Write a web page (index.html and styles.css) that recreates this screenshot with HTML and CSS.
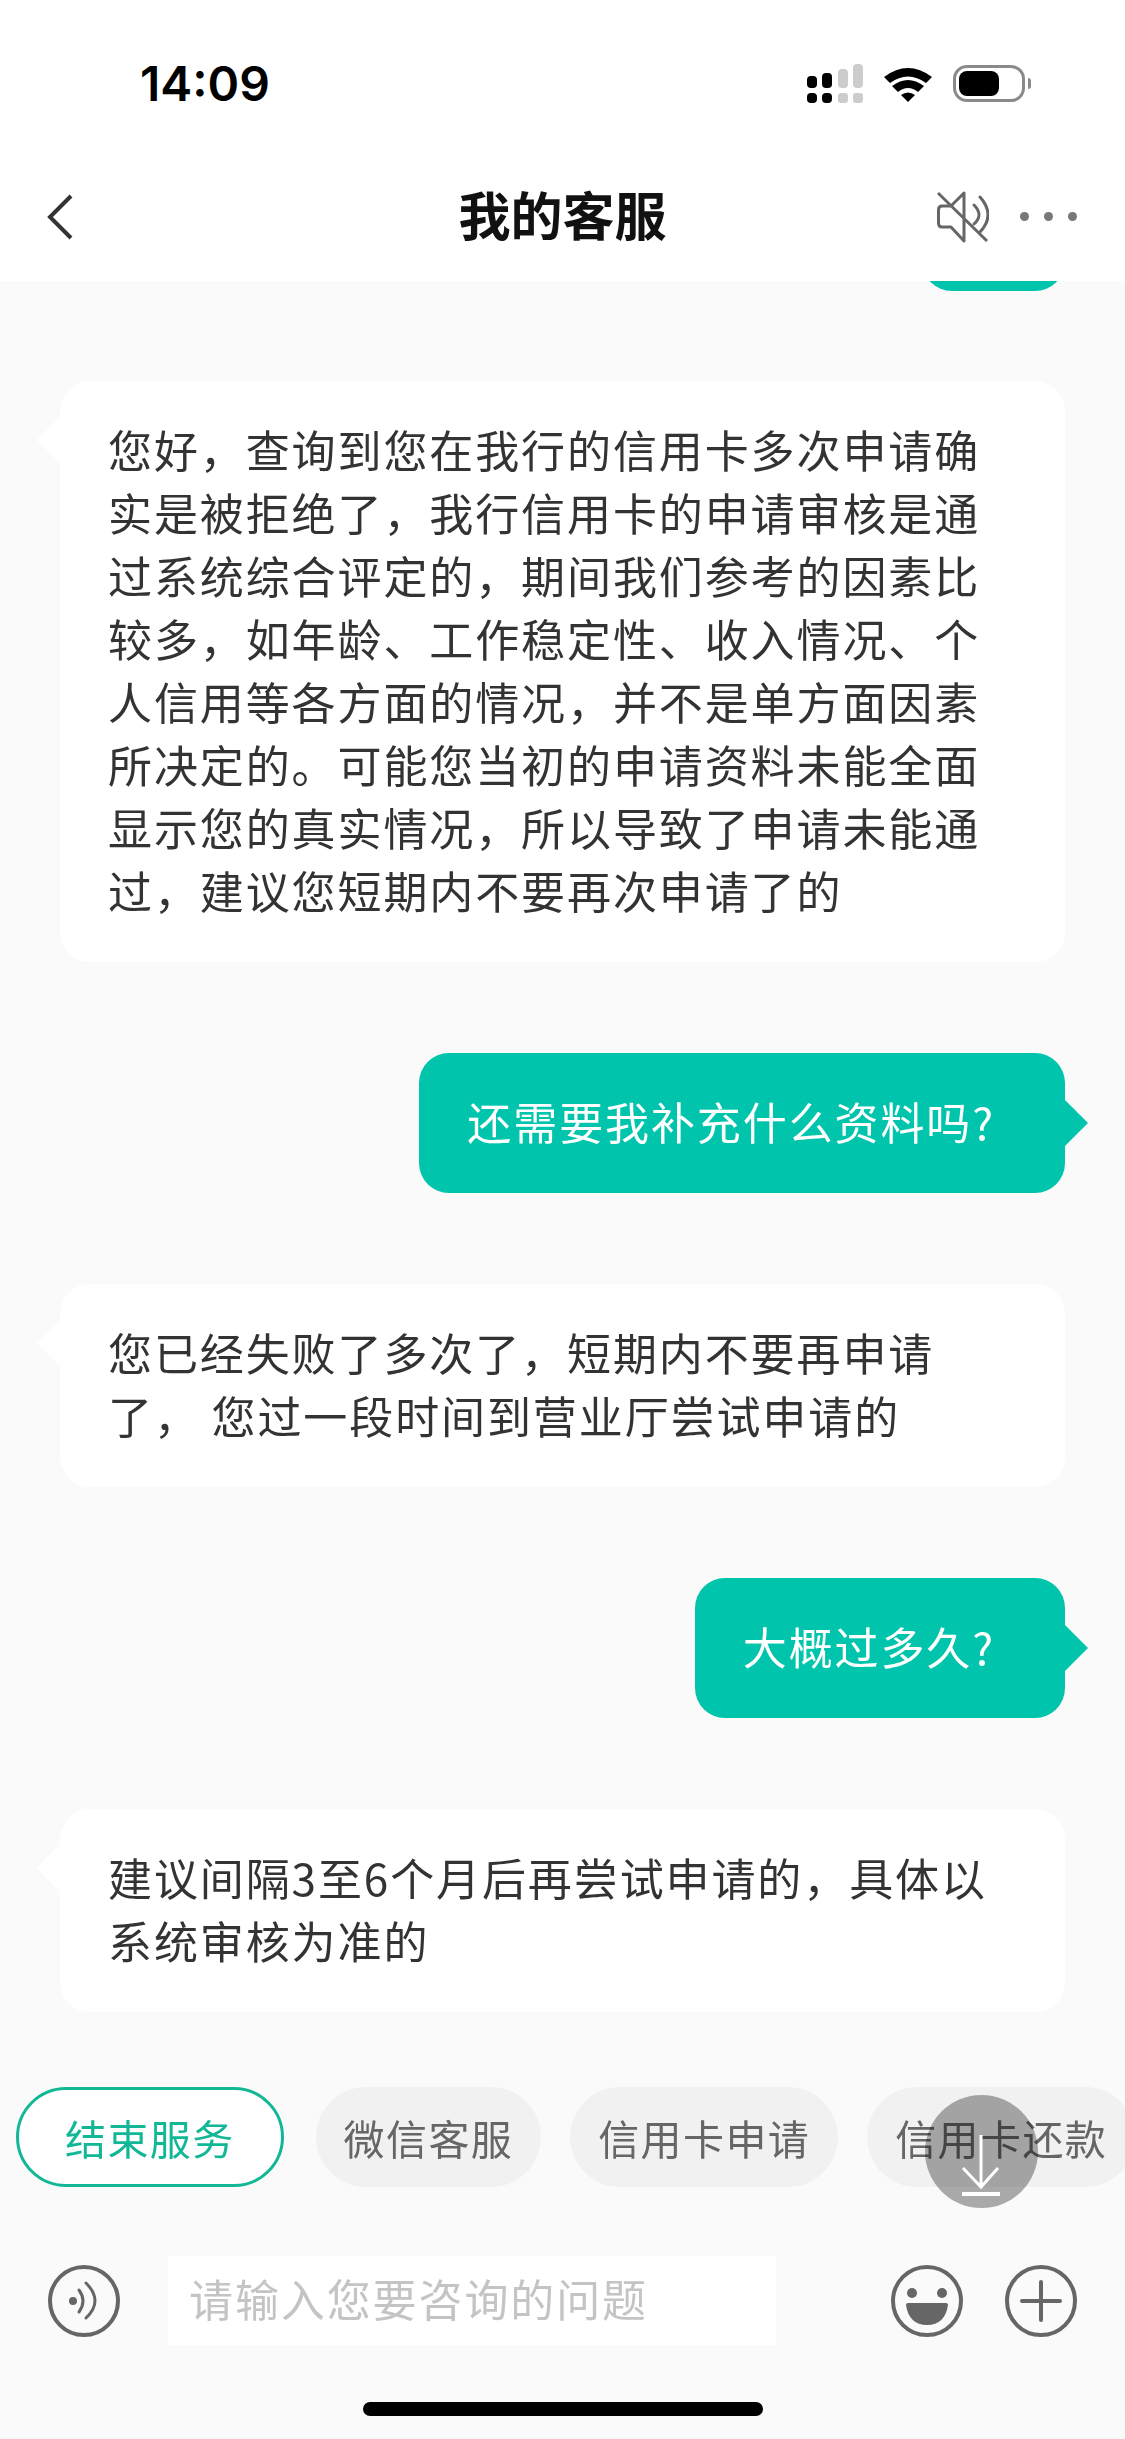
FILE: index.html
```html
<!DOCTYPE html>
<html lang="zh-CN">
<head>
  <meta charset="UTF-8">
  <title>我的客服</title>
  <link rel="stylesheet" href="styles.css">
</head>
<body>

  <div class="app">
    <header class="header">
      <div class="status-bar">
        <span class="time">14:09</span>
        <div class="status-icons">
          <svg class="signal" width="56" height="39" viewBox="0 0 56 39">
            <rect x="0" y="12" width="10" height="12" rx="4" fill="#000"/>
            <rect x="15" y="9" width="10" height="15" rx="4" fill="#000"/>
            <rect x="31" y="5" width="10" height="19" rx="4" fill="#ccc"/>
            <rect x="46" y="0" width="10" height="24" rx="4" fill="#ccc"/>
            <rect x="0" y="29" width="10" height="10" rx="4" fill="#000"/>
            <rect x="15" y="29" width="10" height="10" rx="4" fill="#000"/>
            <rect x="31" y="29" width="10" height="10" rx="3" fill="#ccc"/>
            <rect x="46" y="29" width="10" height="10" rx="3" fill="#ccc"/>
          </svg>
          <svg class="wifi" width="48" height="36" viewBox="0 0 48 36">
            <path d="M0 11 Q24 -7 48 11 L42 17 Q24 4 6 17 Z" fill="#000"/>
            <path d="M8 20 Q24 8 40 20 L34 26 Q24 18 14 26 Z" fill="#000"/>
            <path d="M17 29 Q24 24 31 29 L24 36 Z" fill="#000"/>
          </svg>
          <div class="battery">
            <div class="battery-fill"></div>
          </div>
          <div class="battery-nub"></div>
        </div>
      </div>
      <nav class="nav">
        <svg class="back" width="26" height="46" viewBox="0 0 26 46">
          <path d="M24 2 L3 23 L24 44" fill="none" stroke="#333" stroke-width="4"/>
        </svg>
        <h1 class="title">我的客服</h1>
        <svg class="mute" width="52" height="52" viewBox="0 0 52 52">
          <path d="M27 2 L14 15 H5 Q1.5 15 1.5 19 V32 Q1.5 36 5 36 H14 L27 50 Z" fill="none" stroke="#666" stroke-width="3" stroke-linejoin="round"/>
          <path d="M37 14 Q47 24 37 33" fill="none" stroke="#666" stroke-width="3" stroke-linecap="round"/>
          <path d="M43 6 Q59 24 43 41" fill="none" stroke="#666" stroke-width="3" stroke-linecap="round"/>
          <path d="M1 2 L50 50" fill="none" stroke="#666" stroke-width="3"/>
        </svg>
        <div class="more">
          <span class="more-dot"></span>
          <span class="more-dot"></span>
          <span class="more-dot"></span>
        </div>
      </nav>
    </header>

    <main class="chat">
      <div class="bubble bubble-me bubble-cut"></div>

      <div class="bubble bubble-them">
        您好，查询到您在我行的信用卡多次申请确<br>
        实是被拒绝了，我行信用卡的申请审核是通<br>
        过系统综合评定的，期间我们参考的因素比<br>
        较多，如年龄、工作稳定性、收入情况、个<br>
        人信用等各方面的情况，并不是单方面因素<br>
        所决定的。可能您当初的申请资料未能全面<br>
        显示您的真实情况，所以导致了申请未能通<br>
        过，建议您短期内不要再次申请了的
      </div>

      <div class="bubble bubble-me">还需要我补充什么资料吗?</div>

      <div class="bubble bubble-them">
        您已经失败了多次了，短期内不要再申请<br>
        了， 您过一段时间到营业厅尝试申请的
      </div>

      <div class="bubble bubble-me">大概过多久?</div>

      <div class="bubble bubble-them">
        建议间隔3至6个月后再尝试申请的，具体以<br>
        系统审核为准的
      </div>
    </main>

    <footer class="footer">
      <div class="chips">
        <span class="chip chip-end">结束服务</span>
        <span class="chip">微信客服</span>
        <span class="chip">信用卡申请</span>
        <span class="chip">信用卡还款</span>
      </div>

      <button class="to-bottom" type="button">
        <svg width="44" height="62" viewBox="0 0 44 62">
          <path d="M21 0 V52 M3 33 L21 52 L38 33" fill="none" stroke="#fff" stroke-width="3"/>
          <path d="M2 59 H40" fill="none" stroke="#fff" stroke-width="4"/>
        </svg>
      </button>

      <div class="input-row">
        <svg class="round-icon" width="72" height="72" viewBox="0 0 72 72">
          <circle cx="36" cy="36" r="34" fill="none" stroke="#666" stroke-width="4"/>
          <circle cx="25" cy="36" r="4" fill="#666"/>
          <path d="M31 25 Q39 36 31 47" fill="none" stroke="#666" stroke-width="3" stroke-linecap="round"/>
          <path d="M38 18 Q56 36 38 53" fill="none" stroke="#666" stroke-width="3" stroke-linecap="round"/>
        </svg>
        <div class="input">请输入您要咨询的问题</div>
        <svg class="round-icon emoji" width="72" height="72" viewBox="0 0 72 72">
          <circle cx="36" cy="36" r="34" fill="none" stroke="#666" stroke-width="4"/>
          <circle cx="21" cy="28" r="5" fill="#666"/>
          <circle cx="51" cy="28" r="5" fill="#666"/>
          <path d="M15 40 Q15 38 17 38 H55 Q57 38 57 40 Q54 60 36 60 Q18 60 15 40 Z" fill="#666"/>
        </svg>
        <svg class="round-icon" width="72" height="72" viewBox="0 0 72 72">
          <circle cx="36" cy="36" r="34" fill="none" stroke="#666" stroke-width="4"/>
          <path d="M17 36 H55 M36 17 V55" fill="none" stroke="#666" stroke-width="4" stroke-linecap="round"/>
        </svg>
      </div>

      <div class="home-bar"></div>
    </footer>
  </div>

</body>
</html>
```

FILE: styles.css
```css
* {
  box-sizing: border-box;
}

body {
  margin: 0;
  background-color: #fafafa;
  font-family: "Noto Sans CJK SC", "Noto Sans", sans-serif;
  color: #333;
}

.app {
  width: 1125px;
  height: 2439px;
  display: flex;
  flex-direction: column;
  overflow: hidden;
}

/* cabecera */
.header {
  height: 281px;
  background: #fff;
  flex-shrink: 0;
  position: relative;
  z-index: 1;
}

.status-bar {
  height: 152px;
  padding: 64px 94px 0 140px;
  display: flex;
  justify-content: space-between;
  align-items: flex-start;
}

.time {
  font-family: Inter, "Liberation Sans", sans-serif;
  font-size: 48px;
  font-weight: 600;
  line-height: 40px;
  color: #000;
}

.status-icons {
  display: flex;
  align-items: flex-start;
}

.signal {
  display: block;
  margin-right: 21px;
}

.wifi {
  display: block;
  margin-right: 21px;
  margin-top: 2px;
}

.battery {
  width: 72px;
  height: 37px;
  margin-top: 1px;
  padding: 3px;
  border: 3px solid #8a8a8a;
  border-radius: 14px;
}

.battery-fill {
  width: 40px;
  height: 25px;
  background: #000;
  border-radius: 8px;
}

.battery-nub {
  width: 3px;
  height: 11px;
  margin: 14px 0 0 3px;
  background: #8a8a8a;
  border-radius: 0 3px 3px 0;
}

.nav {
  height: 129px;
  padding: 0 48px 0 47px;
  display: flex;
  align-items: center;
  position: relative;
}

.back {
  display: block;
}

.title {
  margin: -7px 0 0;
  font-size: 52px;
  font-weight: 700;
  color: #111;
  position: absolute;
  left: 0;
  right: 0;
  text-align: center;
}

.mute {
  display: block;
  margin-left: auto;
  margin-right: 31px;
}

.more {
  display: flex;
  gap: 15px;
}

.more-dot {
  width: 9px;
  height: 9px;
  background: #777;
  border-radius: 50%;
}

/* mensajes */
.chat {
  flex: 1;
  min-height: 0;
  padding: 0 60px;
  display: flex;
  flex-direction: column;
  align-items: flex-start;
  overflow: hidden;
}

.bubble {
  margin-bottom: 91px;
  padding: 37px 48px 40px;
  border-radius: 30px;
  font-size: 44px;
  line-height: 63px;
  letter-spacing: 1.9px;
  white-space: nowrap;
  position: relative;
  flex-shrink: 0;
}

.bubble-them {
  width: 1005px;
  background: #fff;
  color: #333;
}

.bubble-them::before {
  content: "";
  position: absolute;
  left: -23px;
  top: 36px;
  border-style: solid;
  border-width: 23px 23px 23px 0;
  border-color: transparent #fff transparent transparent;
}

.bubble-me {
  align-self: flex-end;
  padding-right: 70px;
  background: #00c5ac;
  color: #fff;
}

.bubble-me::after {
  content: "";
  position: absolute;
  right: -23px;
  top: 47px;
  border-style: solid;
  border-width: 23px 0 23px 23px;
  border-color: transparent transparent transparent #00c5ac;
}

.bubble-cut {
  width: 143px;
  height: 140px;
  margin-top: -130px;
  margin-bottom: 90px;
}

/* parte inferior */
.footer {
  height: 352px;
  flex-shrink: 0;
  position: relative;
}

.chips {
  display: flex;
  gap: 29px;
  padding-left: 16px;
  overflow: hidden;
}

.chip {
  height: 100px;
  padding: 0 28px;
  display: flex;
  align-items: center;
  flex-shrink: 0;
  background: #f1f1f1;
  border-radius: 50px;
  font-size: 41px;
  letter-spacing: 1.4px;
  color: #666;
}

.chip-end {
  margin-right: 3px;
  padding: 0 46px;
  background: #fff;
  border: 3px solid #12b896;
  color: #12b896;
}

.to-bottom {
  width: 113px;
  height: 113px;
  padding: 28px 0 0;
  border: none;
  border-radius: 50%;
  background: none;
  position: absolute;
  left: 925px;
  top: 8px;
}

/* el circulo oscurece lo de abajo, la flecha queda blanca */
.to-bottom::before {
  content: "";
  position: absolute;
  top: 0;
  left: 0;
  width: 100%;
  height: 100%;
  border-radius: 50%;
  background: #adadad;
  mix-blend-mode: multiply;
}

.to-bottom svg {
  display: block;
  margin: 0 auto;
  position: relative;
}

.input-row {
  height: 89px;
  margin-top: 69px;
  padding-left: 48px;
  display: flex;
  align-items: center;
}

.round-icon {
  display: block;
  flex-shrink: 0;
}

.input {
  width: 608px;
  height: 89px;
  margin-left: 48px;
  padding-left: 21px;
  background: #fff;
  font-size: 44px;
  letter-spacing: 1.9px;
  line-height: 85px;
  color: #c4c4c4;
}

.emoji {
  margin-left: 115px;
  margin-right: 42px;
}

.home-bar {
  width: 400px;
  height: 14px;
  margin: 57px auto 0;
  background: #000;
  border-radius: 7px;
}
```
